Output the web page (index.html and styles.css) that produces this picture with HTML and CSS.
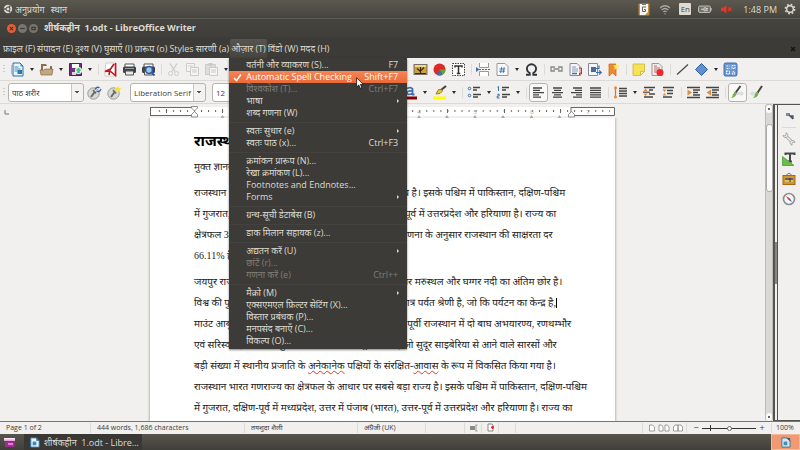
FILE: index.html
```html
<!DOCTYPE html>
<html lang="hi">
<head>
<meta charset="utf-8">
<title>शीर्षकहीन 1.odt - LibreOffice Writer</title>
<link rel="stylesheet" href="styles.css">
</head>
<body>
<header class="panel">
  <svg class="icon" viewBox="0 0 14 14"><circle cx="7" cy="7" r="4.200" fill="#dedbd2"/><circle cx="7" cy="7" r="2" fill="none" stroke="#4b4a43" stroke-width="1"/><g fill="#4b4a43"><circle cx="4" cy="7" r=".9"/><circle cx="8.500" cy="4.500" r=".9"/><circle cx="8.500" cy="9.500" r=".9"/></g></svg>
  <nav class="panel-menu"><a href="#apps">अनुप्रयोग</a><a href="#places">स्थान</a></nav>
  <div class="tray">
    <svg class="icon" viewBox="0 0 14 14"><rect x="1.500" y="1.500" width="11" height="12" rx="1" fill="#c48a3c"/><path d="M3 2h8v8l-3 3H3z" fill="#f5f4f0"/><rect x="5" y="1" width="4" height="2" fill="#777"/><path d="M9 5H5.500v4.500h3V7.500H7" stroke="#666" fill="none"/></svg>
    <svg class="icon" viewBox="0 0 14 14" fill="none" stroke="#aaa89f" stroke-width="1.200"><path d="M2 6q5-4.500 10 0M3.700 8q3.300-3 6.600 0M5.400 9.900q1.600-1.500 3.200 0"/><path d="M7 11.500v.8" stroke="#ddd"/></svg>
    <span class="lang">En</span>
    <svg class="icon" viewBox="0 0 14 14"><rect x=".5" y="4" width="12" height="6.500" rx="1.500" fill="#77756e" stroke="#bab7ae"/><path d="M13 6v2.500" stroke="#bab7ae" stroke-width="1.500"/><path d="M3 7.300h3M6 5.800h2v3H6zM8 6.500h2M8 8.200h2" stroke="#ddd" fill="none" stroke-width=".8"/></svg>
    <svg class="icon" viewBox="0 0 14 14"><path d="M2 5.500h2.500L7.500 3v8.500L4.500 9H2z" fill="#e0382b"/><path d="M9 5.500l3.500 3.500M12.500 5.500L9 9" stroke="#e0382b" stroke-width="1.100"/></svg>
    <time class="clock">1:48 PM</time>
    <svg class="icon" viewBox="0 0 14 14" fill="none" stroke="#dedbd2"><circle cx="7" cy="7" r="3.300" stroke-width="1.400"/><circle cx="7" cy="7" r="4.700" stroke-width="1.400" stroke-dasharray="1.800 1.890"/></svg>
  </div>
</header>

<div class="titlebar">
  <button class="win close" aria-label="Close"><svg viewBox="0 0 8 8"><path d="M2.500 2.500l3 3M5.500 2.500l-3 3"/></svg></button>
  <button class="win" aria-label="Minimize"><svg viewBox="0 0 8 8"><path d="M2 4h4"/></svg></button>
  <button class="win" aria-label="Maximize"><svg viewBox="0 0 8 8"><path d="M2.500 3h3v2h-3z"/></svg></button>
  <h1 class="title">शीर्षकहीन&nbsp; 1.odt - LibreOffice Writer</h1>
</div>

<nav class="menubar">
  <button>फ़ाइल (F)</button><button>संपादन (E)</button><button>दृश्य (V)</button><button>घुसाएँ (I)</button><button>प्रारूप (o)</button><button>Styles</button><button>सारणी (a)</button>
  <div class="menu-anchor">
    <button class="open">औज़ार (T)</button>
    <div class="menu">
      <button>वर्तनी और व्याकरण (S)...<kbd>F7</kbd></button>
      <button class="active"><svg class="check" viewBox="0 0 9 9"><path d="M1 5l2.500 2.500L8 1.500"/></svg>Automatic Spell Checking<kbd>Shift+F7</kbd></button>
      <button disabled>विश्वकोश (T)...<kbd>Ctrl+F7</kbd></button>
      <button class="sub">भाषा</button>
      <button>शब्द गणना (W)</button>
      <hr>
      <button class="sub">स्वतः सुधार (e)</button>
      <button>स्वतः पाठ (x)...<kbd>Ctrl+F3</kbd></button>
      <hr>
      <button>क्रमांकन प्रारूप (N)...</button>
      <button>रेखा क्रमांकण (L)...</button>
      <button>Footnotes and Endnotes...</button>
      <button class="sub">Forms</button>
      <hr>
      <button>ग्रन्थ-सूची डेटाबेस (B)</button>
      <hr>
      <button>डाक मिलान सहायक (z)...</button>
      <hr>
      <button class="sub">अद्यतन करें (U)</button>
      <button disabled>छांटें (r)...</button>
      <button disabled>गणना करें (e)<kbd>Ctrl++</kbd></button>
      <hr>
      <button class="sub">मैक्रो (M)</button>
      <button>एक्सएमएल फ़िल्टर सेटिंग (X)...</button>
      <button>विस्तार प्रबंधक (P)...</button>
      <button>मनपसंद बनाएँ (C)...</button>
      <button>विकल्प (O)...</button>
      <svg class="pointer" viewBox="0 0 8 12"><path d="M.6 .8v9.200l2.200-2 1.400 3.300 1.600-.7-1.400-3.200h3z" fill="#fff" stroke="#111" stroke-width=".8"/></svg>
    </div>
  </div>
  <button>विंडो (W)</button><button>मदद (H)</button>
  <button class="doc-close" aria-label="Close document"><svg viewBox="0 0 8 8"><path d="M2 2l4 4M6 2L2 6"/></svg></button>
</nav>

<div class="toolbar">
  <i class="grip"></i>
  <button class="tool" aria-label="New"><svg viewBox="0 0 15 15"><path d="M3 1h7l3 3v10H3z" fill="#e8f3fa" stroke="#2c6f9e"/><path d="M4.500 5h4M4.500 7h6M4.500 9h3" stroke="#4a90bd"/><rect x="7.500" y="8" width="4.500" height="4" fill="#2d7aae"/><path d="M10.500 1.500l2.500 3h-2.500z" fill="#3a91c8"/><path d="M1.500 3v9" stroke="#9cc4dc"/></svg></button><button class="drop" aria-label="New options"></button>
  <button class="tool" aria-label="Open"><svg viewBox="0 0 15 15"><path d="M2 2h5l1 2h5v8H2z" fill="#8d6d4b"/><path d="M4 4h7v6H4z" fill="#f0eeea"/><path d="M1 8h4l1-1h8l-1 6H2z" fill="#c4a680" stroke="#7a5c3c" stroke-width=".6"/></svg></button><button class="drop" aria-label="Open options"></button>
  <button class="tool" aria-label="Save"><svg viewBox="0 0 15 15"><path d="M1.500 1.500h12v12h-12z" fill="#73307e" stroke="#4c1d57"/><path d="M4 2h7v4H4z" fill="#fff"/><path d="M4 10h4v3H4z" fill="#ded2e2"/><circle cx="10.500" cy="8.500" r="3.600" fill="#d9f5e4"/><path d="M10.500 5.500l3 3h-1.700v2.500H9.200V8.500H7.500z" fill="#4cc27f"/></svg></button><button class="drop" aria-label="Save options"></button>
  <i class="sep"></i>
  <button class="tool" aria-label="Export PDF"><svg viewBox="0 0 15 15"><path d="M3 1h10v13H2V9z" fill="#fff" stroke="#bbb" stroke-width=".7"/><path d="M12.500 1v12.500L7 9l-5 .5L7.500 7 11 2M7 7l-1 6" fill="none" stroke="#c4161c" stroke-width="1.600"/></svg></button>
  <button class="tool" aria-label="Print"><svg viewBox="0 0 15 15"><path d="M3 2h9v4H3z" fill="#fff" stroke="#555"/><rect x="1" y="4.500" width="13" height="6.500" rx="1.500" fill="#3f4346"/><path d="M3 6.500h9" stroke="#9a9ea0"/><path d="M3.500 9h8v4h-8z" fill="#e8e8e6" stroke="#555"/></svg></button>
  <button class="tool" aria-label="Preview"><svg viewBox="0 0 15 15"><path d="M3 2h9v4H3z" fill="#fff" stroke="#555"/><rect x="1" y="4.500" width="13" height="6.500" rx="1.500" fill="#3f4346"/><path d="M3.500 9h8v4h-8z" fill="#e8e8e6" stroke="#555"/><circle cx="8" cy="8" r="3.400" fill="#9fc3ec" stroke="#2a5aa0" stroke-width="1.500"/><path d="M10.500 10.500l3 3" stroke="#2a5aa0" stroke-width="1.800"/></svg></button>
  <i class="sep"></i>
  <button class="tool faded" disabled aria-label="Cut"><svg viewBox="0 0 15 15" fill="none" stroke="#888"><path d="M4 1.500l5 8M11 1.500l-5 8" stroke-width="1.300"/><circle cx="4.500" cy="11.500" r="2"/><circle cx="10.500" cy="11.500" r="2"/></svg></button>
  <button class="tool faded" disabled aria-label="Copy"><svg viewBox="0 0 15 15" fill="#fff" stroke="#888"><path d="M1.500 1.500h8v8h-8z"/><path d="M5.500 5.500h8v8h-8z"/><path d="M7 8h5M7 10h5M3 4h5"/></svg></button>
  <button class="tool faded" disabled aria-label="Paste"><svg viewBox="0 0 15 15"><path d="M1.500 2.500h10v10h-10z" fill="#bbb" stroke="#888"/><path d="M4.500 1h4v3h-4z" fill="#888"/><path d="M5.500 5.500h8v8h-8z" fill="#fff" stroke="#888"/><path d="M7 8h5M7 10h5" stroke="#888"/></svg></button><button class="drop" aria-label="Paste options"></button>
  <i class="gap-standard"></i>
  <button class="tool" aria-label="Image"><svg viewBox="0 0 15 15"><rect x="1" y="2.500" width="13" height="10" fill="#d1a13c" stroke="#77736b"/><path d="M2 4h11" stroke="#f4d88a" stroke-width="2"/><path d="M7.500 5v7M4 6.500l3.500 3M11 5.500L7.500 9M2 11.500h11" stroke="#3b2a14" stroke-width="1.100"/></svg></button>
  <button class="tool" aria-label="Chart"><svg viewBox="0 0 15 15"><circle cx="7.500" cy="7.500" r="6" fill="#dc2a24"/><path d="M7.500 7.500h6a6 6 0 0 1-3 5.200z" fill="#5fa53a"/><path d="M7.500 7.500l3 5.200a6 6 0 0 1-5.500.3z" fill="#3d6fb4"/></svg></button>
  <button class="tool" aria-label="Text box"><svg viewBox="0 0 15 15"><path d="M1.500 1.500h12v12h-12z" fill="#fff" stroke="#444" stroke-dasharray="1.500 1"/><path d="M4 5.500V4h7v1.500M7.500 4v7.500M5.800 11.500h3.400" fill="none" stroke="#333" stroke-width="1.500"/></svg></button>
  <i class="sep"></i>
  <button class="tool" aria-label="Page break"><svg viewBox="0 0 15 15"><path d="M3.500 1v4.500h9V1M3.500 14V9.500h9V14" fill="#fff" stroke="#999"/><path d="M3 7.500h11" stroke="#3d6fb4" stroke-dasharray="2 1"/><path d="M0 5l3.500 2.500L0 10z" fill="#3d6fb4"/></svg></button>
  <button class="tool" aria-label="Field"><svg viewBox="0 0 15 15"><path d="M2 1.500h8l3 3v9H2z" fill="#fafafa" stroke="#999"/><path d="M6.700 5l-1 6M9.200 5l-1 6M4.500 7h5.800M4.200 9.200h5.800" stroke="#3d6fb4" stroke-width=".9"/></svg></button><button class="drop" aria-label="Field options"></button>
  <button class="tool" aria-label="Special character"><svg viewBox="0 0 15 15"><path d="M2 12.700h3.700V11A5 5 0 0 1 2.900 6.800a4.600 4.600 0 0 1 9.200 0A5 5 0 0 1 9.300 11v1.700H13" fill="none" stroke="#2f3436" stroke-width="1.900"/></svg></button>
  <i class="sep"></i>
  <button class="tool" aria-label="Hyperlink"><svg viewBox="0 0 15 15" fill="none" stroke="#888" stroke-width="1.300"><path d="M6 5H2v4h4M9 5h4v4H9M4.500 7h6"/></svg></button>
  <button class="tool" aria-label="Footnote"><svg viewBox="0 0 15 15"><path d="M2 1.500h7l3 3v9H2z" fill="#f3f5f8" stroke="#889"/><path d="M4 5h4M4 7h6M4 9h6" stroke="#8d9bb0"/><path d="M4 11.500h5" stroke="#3d6fb4" stroke-width="1.500"/><path d="M11 6h2.500v6H11l1.500-1.500M11 12l1.500 1.200" fill="none" stroke="#dc2a24"/></svg></button>
  <button class="tool" aria-label="Cross-reference"><svg viewBox="0 0 15 15"><path d="M1.500 1.500h9v12h-9z" fill="#f3f5f8" stroke="#889"/><path d="M4 5h5v5H4z" fill="#52698a"/><path d="M9 6.500h3v-3M9 10.500h5M12 8.500l2.500 2-2.500 2" fill="none" stroke="#3d6fb4" stroke-width="1.200"/></svg></button>
  <button class="tool" aria-label="Bookmark"><svg viewBox="0 0 15 15"><path d="M3 2h7v12l-3.500-3L3 14z" fill="#ee8a2c" stroke="#c2661a" stroke-width=".7"/><path d="M10.500 1l1 2.200 2.500.4-1.800 1.700.5 2.500-2.200-1.200-2.200 1.200.5-2.500L7 3.600l2.500-.4z" fill="#ffe96b"/></svg></button>
  <i class="sep"></i>
  <button class="tool" aria-label="Comment"><svg viewBox="0 0 15 15"><path d="M2 2h11.500v7.500l-4 4H2z" fill="#f6e255" stroke="#cdb53a" stroke-width=".8"/><path d="M9.500 13.500v-4h4z" fill="#fff6b0" stroke="#cdb53a" stroke-width=".8"/></svg></button>
  <button class="tool" aria-label="Track changes"><svg viewBox="0 0 15 15"><path d="M2 1.500h7l3 3v9H2z" fill="#eee" stroke="#999"/><path d="M4 4h3M4 6h6M4 8h5M4 10h3" stroke="#c66"/><circle cx="10" cy="10.500" r="3.500" fill="#ea2b2f"/></svg></button>
  <i class="sep"></i>
  <button class="tool" aria-label="Line"><svg viewBox="0 0 15 15"><path d="M2 12.500L13 2.500" stroke="#444" stroke-width="1.200"/></svg></button>
  <button class="tool" aria-label="Shapes"><svg viewBox="0 0 15 15"><path d="M7.500 1.500l6 6-6 6-6-6z" fill="#6090d0" stroke="#315f9d"/></svg></button><button class="drop" aria-label="Shape options"></button>
  <button class="tool" aria-label="Draw functions"><svg viewBox="0 0 15 15"><rect x="1" y="1" width="13" height="13" rx="1.500" fill="#6d97cf" stroke="#3d6fb4"/><path d="M3.500 4h3M3.500 6.500h3M9 3.500h3v3H9zM3.500 9h3v3h-3zM9 12l1.500-3 1.500 3z" fill="none" stroke="#fff" stroke-dasharray="1.500 .7"/></svg></button>
</div>

<div class="toolbar">
  <i class="grip"></i>
  <select class="combo wide" aria-label="Paragraph style"><option>पाठ शरीर</option></select>
  <button class="tool style" aria-label="Update style"><svg viewBox="0 0 15 15"><circle cx="6.500" cy="8.500" r="5.700" fill="#d8dad7" stroke="#9a9c99"/><path d="M4 12l4-5.500" stroke="#666a6b" stroke-width="2"/><path d="M6 5l3 3.500" stroke="#666a6b" stroke-width="1.600"/><path d="M8 4.500q2-3.500 4.500-1.500M14 4q-1.500 4-4.500 2" fill="none" stroke="#2f65b0" stroke-width="1.400"/></svg></button>
  <button class="tool style" aria-label="New style"><svg viewBox="0 0 15 15"><circle cx="6.500" cy="8.500" r="5.700" fill="#d8dad7" stroke="#9a9c99"/><path d="M4 12l4-5.500" stroke="#666a6b" stroke-width="2"/><path d="M6 5l3 3.500" stroke="#666a6b" stroke-width="1.600"/><path d="M11 .8l1 2.200 2.500.3-1.800 1.800.5 2.500-2.200-1.200-2.200 1.200.5-2.500L7.500 3.300l2.500-.3z" fill="#f5e13a"/></svg></button>
  <select class="combo wide font" aria-label="Font name"><option>Liberation Serif</option></select>
  <select class="combo size" aria-label="Font size"><option>12</option></select>
  <i class="gap-format"></i>
  <button class="tool" aria-label="Font colour"><svg viewBox="0 0 15 15"><path d="M4 3.500q4-2 5.500.5V9M9.500 6Q4 5.500 4 8t5.500.500M9 9.500h2.500" fill="none" stroke="#3d6fb4" stroke-width="1.800"/><path d="M1 11.500h13v3H1z" fill="#8b0000"/></svg></button><button class="drop" aria-label="Colour options"></button>
  <button class="tool" aria-label="Highlight"><svg viewBox="0 0 15 15"><path d="M14 1L9 5" stroke="#444" stroke-width="2.200"/><path d="M9.500 4.500l-3 0L4 9l4-.5 2.500-2.500z" fill="#e9c52c" stroke="#7d6a1f" stroke-width=".8"/><path d="M1 11.500h13v3H1z" fill="#ff0"/></svg></button><button class="drop" aria-label="Highlight options"></button>
  <i class="sep"></i>
  <button class="tool" aria-label="Bullets"><svg viewBox="0 0 15 15"><path d="M6 2.500h7M6 5h4M6 9.500h8M6 12h5" stroke="#444" stroke-width="1.400"/><g fill="none" stroke="#3d6fb4"><circle cx="2.500" cy="3.500" r="1.300"/><circle cx="2.500" cy="10.500" r="1.300"/></g></svg></button><button class="drop" aria-label="Bullet options"></button>
  <button class="tool" aria-label="Numbering"><svg viewBox="0 0 15 15"><path d="M6 2.500h7M6 5h4M6 9.500h8M6 12h5" stroke="#444" stroke-width="1.400"/><path d="M1.500 2L2.500 1.500V6M1.200 9.300h2v1.700h-2v2h2.300" fill="none" stroke="#3d6fb4"/></svg></button><button class="drop" aria-label="Numbering options"></button>
  <i class="sep"></i>
  <button class="tool pressed" aria-label="Align left"><svg viewBox="0 0 15 15"><path d="M2 3h9M2 5.300h7M2 7.600h11M2 9.900h6M2 12.200h8"/></svg></button>
  <button class="tool lines" aria-label="Align centre"><svg viewBox="0 0 15 15"><path d="M3 3h9M4 5.300h7M2 7.600h11M4 9.900h7M3 12.200h9"/></svg></button>
  <button class="tool lines" aria-label="Align right"><svg viewBox="0 0 15 15"><path d="M4 3h9M6 5.300h7M2 7.600h11M7 9.900h6M4 12.200h9"/></svg></button>
  <button class="tool lines" aria-label="Justify"><svg viewBox="0 0 15 15"><path d="M2 3h11M2 5.300h11M2 7.600h11M2 9.900h11M2 12.200h11"/></svg></button>
  <i class="sep"></i>
  <button class="tool lines" aria-label="Line spacing"><svg viewBox="0 0 15 15"><path d="M6 3.500h8M6 6h8M6 8.500h8M6 11h8"/><path d="M2.500 3v9" style="stroke:#d9762b"/><circle cx="2.500" cy="2.800" r="1.500" fill="#e98a3a"/><circle cx="2.500" cy="12" r="1.500" fill="#e98a3a"/></svg></button><button class="drop" aria-label="Spacing options"></button>
  <button class="tool lines" aria-label="Increase spacing"><svg viewBox="0 0 15 15"><path d="M2 2.500h11M7 5h4M7 9h6M2 12h9"/><path d="M1 7.200h7" style="stroke:#555"/><path d="M3.500 3.500l2 2.500h-4zM3.500 11l2-2.500h-4z" fill="#e98a3a"/></svg></button>
  <button class="tool lines" aria-label="Decrease spacing"><svg viewBox="0 0 15 15"><path d="M2 2.500h11M6 5.500h6M6 8.500h6M2 12h9"/><path d="M3.500 7l2-2.500h-4zM3.500 8l2 2.500h-4z" fill="#e98a3a"/></svg></button>
  <i class="sep"></i>
  <button class="tool lines" aria-label="Increase indent"><svg viewBox="0 0 15 15"><path d="M1 2.500h13M7 5h7M7 7.500h5M7 10h7M1 12.500h13"/><path d="M1.500 4.500L6 7.500l-4.500 3z" fill="#e98a3a"/></svg></button>
  <button class="tool lines" aria-label="Decrease indent"><svg viewBox="0 0 15 15"><path d="M1 2.500h13M7 5h7M7 7.500h5M7 10h7M1 12.500h13"/><path d="M6 4.500L1.500 7.500l4.500 3z" fill="#e98a3a"/></svg></button>
  <i class="sep"></i>
  <button class="tool pressed" aria-label="Left to right"><svg viewBox="0 0 15 15"><path d="M7 7h4V5.500l3 3-3 3V10H6z" fill="#ddd"/><path d="M10.500 1L5 8.500" style="stroke:#444;stroke-width:2"/><path d="M6 6.500L3 9q-.5 3-2 4 4 0 5.500-4z" fill="#6fb544"/></svg></button>
  <button class="tool lines" aria-label="Right to left"><svg viewBox="0 0 15 15"><path d="M8 7H4V5.500l-3 3 3 3V10h4z" fill="#ddd"/><path d="M13 1L8 8.500" style="stroke:#444;stroke-width:2"/><path d="M8.500 6.500L6 9q-.5 3-2 4 4 0 5.500-4z" fill="#6fb544"/></svg></button>
</div>

<main class="workspace">
  <section class="editor">
    <div class="ruler-row">
      <svg class="tab-mark" viewBox="0 0 6 6"><path d="M1 1v4h4" fill="none" stroke="#777"/></svg>
      <svg class="ruler" viewBox="0 0 465 14">
        <defs><pattern id="tick" width="7.040" height="14" patternUnits="userSpaceOnUse" x="44"><rect x="0" y="6" width="1" height="2" fill="#666"/></pattern></defs>
        <rect width="465" height="9" y="3" fill="#fff"/>
        <rect width="456" height="14" x="4" fill="url(#tick)"/>
        <g stroke="#666" fill="none"><path d="M16.500 5v4M72.500 5v4M128.500 5v4M185.500 5v4M241.500 5v4M297.500 5v4M354.500 5v4M410.500 5v4" stroke-width="1"/><path d="M.5 3.500h44M.5 11.500h44M.5 3v9M421 3.500h43.500v8H421V3" /></g>
        <g fill="#aaa"><path d="M70.500 14l2-3 2 3zM98.500 14l2-3 2 3zM126.500 14l2-3 2 3zM154.500 14l2-3 2 3zM182.500 14l2-3 2 3zM210.500 14l2-3 2 3zM238.500 14l2-3 2 3zM267 14l2-3 2 3zM295 14l2-3 2 3zM323 14l2-3 2 3zM351 14l2-3 2 3zM379.500 14l2-3 2 3zM407.500 14l2-3 2 3z"/></g>
        <g class="ruler-num"><text x="269" y="10">4</text><text x="325" y="10">5</text><text x="382" y="10">6</text><text x="438" y="10">7</text></g>
        <g fill="#f7f7f6" stroke="#777" stroke-width=".8"><path d="M41.500 2.500h6v1.500l-3 3-3-3zM41.500 13v-2.500l3-3 3 3V13z"/><path d="M418.500 13v-2.500l3-3 3 3V13z"/></g>
      </svg>
    </div>
    <div class="canvas">
      <article class="page">
        <h2>राजस्थान</h2>
        <p class="lead">मुक्त ज्ञानकोश से</p>
        <p>राजस्थान भारत गणराज्य का क्षेत्रफल के आधार पर बड़ा राज्य है। इसके पश्चिम में पाकिस्तान, दक्षिण-पश्चिम<br>में गुजरात, दक्षिण-पूर्व में मध्यप्रदेश, उत्तर में पंजाब भी, उत्तर-पूर्व में उत्तरप्रदेश और हरियाणा है। राज्य का<br>क्षेत्रफल 3,42,239 वर्ग कि.मी. (132,139 वर्ग मील) है। जन गणना के अनुसार राजस्थान की साक्षरता दर<br>66.11% हैं।</p>
        <p>जयपुर राज्य की राजधानी है। भौगोलिक विशेषता में पश्चिम थार मरुस्थल और घग्गर नदी का अंतिम छोर है।<br>विश्व की पुरातन श्रेणियों में अरावली श्रेणी राजस्थान की एक मात्र पर्वत श्रेणी है, जो कि पर्यटन का केन्द्र है,<span class="caret"></span><br>माउंट आबू और विश्वविख्यात दिलवाड़ा मंदिर शामिल किए है। पूर्वी राजस्थान में दो बाघ अभयारण्य, रणथम्भौर<br>एवं सरिस्का हैं और भरतपुर के पास केवलादेव राष्ट्रीय उद्यान, जो सुदूर साइबेरिया से आने वाले सारसों और<br>बड़ी संख्या में स्थानीय प्रजाति के <u>अनेकानेक</u> पक्षियों के संरक्षित-<u>आवास</u> के रूप में विकसित किया गया है।<br>राजस्थान भारत गणराज्य का क्षेत्रफल के आधार पर सबसे बड़ा राज्य है। इसके पश्चिम में पाकिस्तान, दक्षिण-पश्चिम<br>में गुजरात, दक्षिण-पूर्व में मध्यप्रदेश, उत्तर में पंजाब (भारत), उत्तर-पूर्व में उत्तरप्रदेश और हरियाणा है। राज्य का</p>
      </article>
    </div>
  </section>
  <div class="scrollbar"><i class="up"></i><i class="thumb"></i><i class="down"></i></div>
  <div class="splitter"><i></i></div>
  <aside class="sidebar">
    <button aria-label="Sidebar settings"><svg viewBox="0 0 14 14"><path d="M4 4h4v3H4z" fill="#7d8ba0"/><path d="M8 7h3v3M11 10L7 6" stroke="#445066" fill="none" stroke-width="1.300"/></svg></button>
    <hr>
    <button aria-label="Properties"><svg viewBox="0 0 14 14"><path d="M3.500 3.500l7 7" stroke="#999" stroke-width="3"/><path d="M3.500 3.500l7 7" stroke="#f2f2f0" stroke-width="1.500"/><path d="M1 3.500a2.500 2.500 0 0 0 4.500 1A2.500 2.500 0 0 0 4 .8V3L3 4zM13 10.500a2.500 2.500 0 0 0-4.500-1A2.500 2.500 0 0 0 10 13.200V11l1-1z" fill="#eee" stroke="#999" stroke-width=".8"/></svg></button>
    <button aria-label="Styles"><svg viewBox="0 0 14 14"><path d="M3.500 3V1.500h9V3M8 1.500v8M6 9.500h4" stroke="#44484a" stroke-width="2" fill="none"/><path d="M.5 4.500L12 13.500H.5z" fill="#6cc04a" stroke="#3f8f25" stroke-width=".7"/></svg></button>
    <button aria-label="Gallery"><svg viewBox="0 0 14 14"><path d="M4 3.500L7 1l3 2.500" fill="none" stroke="#777"/><rect x="1" y="3.500" width="12" height="9" fill="#d6942c" stroke="#a86a16"/><path d="M3 6h8v4.500H3z" fill="#5b6470"/><path d="M3 8h8v2.500H3z" fill="#e5bd5b"/><path d="M8 6v4" stroke="#333"/></svg></button>
    <button aria-label="Navigator"><svg viewBox="0 0 14 14"><circle cx="7" cy="7" r="5.500" fill="#f6f8fb" stroke="#8d8f8e" stroke-width="1.700"/><path d="M4 4l3.800 2.200L6.200 7.800z" fill="#d83a32"/><path d="M10 10L6.200 7.800l1.600-1.600z" fill="#3a62b0"/></svg></button>
  </aside>
</main>

<footer class="status">
  <span>Page 1 of 2</span>
  <span>444 words, 1,686 characters</span>
  <span>तयशुदा शैली</span>
  <span>अंग्रेजी (UK)</span>
  <span></span>
  <span class="mark"><svg viewBox="0 0 9 9"><path d="M1 3h5v4H1z" fill="#8a8a88"/><path d="M7 2v6M6.500 2h2M6.500 8h2" stroke="#999"/></svg></span>
  <span class="mark"><svg viewBox="0 0 9 9"><path d="M2 1h4l1 1v6H2z" fill="#fff" stroke="#888"/><circle cx="6.500" cy="4.500" r="1.400" fill="#d22"/></svg></span>
  <span></span>
  <span></span>
  <span class="views">
    <button aria-label="Single page"><svg viewBox="0 0 8 8"><path d="M1.500 1h3l2 2v4h-5z"/></svg></button>
    <button aria-label="Multiple pages"><svg viewBox="0 0 12 8"><path d="M1 1h2.500l1.500 2v4H1zM7 1h2.500l1.500 2v4H7z"/></svg></button>
    <button aria-label="Book view"><svg viewBox="0 0 12 8"><path d="M1.500 7V3l1.500-2h3v6zM6 7V1h3l1.500 2v4z"/></svg></button>
  </span>
  <span class="zoom"><button aria-label="Zoom out">−</button><input type="range" min="0" max="100" value="50" aria-label="Zoom"><button aria-label="Zoom in">+</button></span>
  <span class="percent">100%</span>
</footer>

<footer class="taskbar">
  <button class="desk" aria-label="Show desktop"><svg viewBox="0 0 14 14"><path d="M2 3h11v3H2z" fill="#e6a6d8"/><path d="M2 3h11v1.500H2z" fill="#fbe9f7"/><path d="M3 6.500h9.500V12H3z" fill="#a02c92"/><path d="M6 8h5v2H6z" fill="#dd7fd0"/></svg></button>
  <button class="task"><svg viewBox="0 0 12 12"><path d="M2 1h6l3 3v7H2z" fill="#e8f3fa" stroke="#3b86b5"/><path d="M4 5h4v4H4z" fill="#3b86b5"/><path d="M8 1l3 3H8z" fill="#195d8a"/></svg>शीर्षकहीन&nbsp; 1.odt - Libre…</button>
  <button class="workspace-switch" aria-label="Workspace"><svg viewBox="0 0 12 12"><path d="M2 1h6l3 3v7H2z" fill="#d5e6ee" stroke="#3b7390"/><path d="M4 5h4v4H4z" fill="#4b8cab"/><path d="M7 1h4v4z" fill="#2b5d78"/></svg></button>
</footer>
</body>
</html>
```
FILE: styles.css
```css
* { box-sizing: border-box; }

body {
  margin: 0;
  height: 100vh;
  display: flex;
  flex-direction: column;
  overflow: hidden;
  background: #f1f0ee;
  color: #3c3c3c;
  font-family: "Open Sans", "Noto Sans", sans-serif;
  font-size: 9px;
}

button {
  margin: 0;
  padding: 0;
  border: 0;
  background: none;
  color: inherit;
  font: inherit;
  white-space: nowrap;
}

button svg { display: block; }

/* Desktop panel */
.panel {
  flex: none;
  display: flex;
  align-items: center;
  height: 18px;
  padding: 0 3px 0 1px;
  background: linear-gradient(#5b594f, #45443e);
  color: #dedbd2;
}

.icon { width: 14px; height: 14px; }
.panel-menu { display: flex; gap: 6px; }
.panel-menu a { color: inherit; text-decoration: none; }
.tray { display: flex; align-items: center; gap: 7px; margin-left: auto; }

.lang {
  width: 12px;
  height: 12px;
  border-radius: 1px;
  background: #dedbd2;
  color: #4b4a43;
  font-size: 8px;
  line-height: 12px;
  text-align: center;
}

.clock { margin: 0 -1px 0 3px; }

/* Window frame */
.titlebar {
  flex: none;
  display: flex;
  align-items: center;
  gap: 2px;
  height: 20px;
  padding-left: 7px;
  border-top: 1px solid #5c5b54;
  background: linear-gradient(#45443f, #3e3d39);
}

.win {
  width: 9px;
  height: 9px;
  border-radius: 50%;
  background: #77756d;
}

.win.close { background: #ee5a30; }
.win svg { width: 9px; height: 9px; fill: none; stroke: #3a3935; }

.title {
  margin: 0 0 2px 4px;
  color: #dedbd2;
  font-size: 9px;
  line-height: 14px;
}

/* Menu bar */
.menubar {
  flex: none;
  display: flex;
  align-items: stretch;
  height: 20px;
  padding: 1px 3px 0 2px;
  background: #3c3b37;
  color: #dedbd2;
}

.menubar > button,
.open { padding: 0 1px; }
.menu-anchor { position: relative; display: flex; }

.open {
  border-radius: 2px 2px 0 0;
  background: linear-gradient(#56554e, #45443f);
}

.menubar > .doc-close { margin-left: auto; padding: 0; }
.doc-close svg { width: 8px; height: 8px; fill: none; stroke: #161614; stroke-width: 1.5; }

.menu {
  position: absolute;
  top: 100%;
  left: -1px;
  z-index: 5;
  width: 178px;
  padding: 1px 0 2px;
  background: #3c3b37;
  box-shadow: 0 1px 2px rgba(0, 0, 0, .5);
}

.menu button {
  position: relative;
  display: flex;
  align-items: center;
  width: 100%;
  height: 12px;
  padding: 0 9px 0 17px;
  line-height: 12px;
}

.menu button:disabled { color: #807e78; }
.menu .active { background: linear-gradient(#f58558, #ea6a36); color: #fff; }
.menu kbd { margin-left: auto; font: inherit; }
.menu hr { height: 1px; margin: 3px 0 2px; border: 0; background: #43423e; }

.sub::after {
  content: "";
  margin-left: auto;
  margin-right: -1px;
  border: 2px solid transparent;
  border-left-color: #dedbd2;
  border-right: 0;
}

.check {
  position: absolute;
  left: 4px;
  width: 9px;
  height: 9px;
  fill: none;
  stroke: #fff;
  stroke-width: 1.5;
}

.pointer { position: absolute; top: 19px; left: 127px; width: 8px; height: 12px; }

/* Toolbars */
.toolbar {
  flex: none;
  display: flex;
  align-items: center;
  height: 23px;
  overflow: hidden;
  border-bottom: 1px solid #dcdad7;
}

.grip {
  flex: none;
  width: 2px;
  height: 9px;
  margin: 0 3px;
  background: repeating-linear-gradient(#ccc 0 1px, transparent 1px 3px);
}

.tool {
  flex: none;
  display: flex;
  align-items: center;
  justify-content: center;
  width: 19px;
  height: 19px;
}

.tool svg { width: 15px; height: 15px; }
.faded { opacity: .35; }

.pressed {
  border: 1px solid #b5b3ae;
  border-radius: 3px;
  background: #f8f8f7;
}

.pressed path,
.lines path { stroke: #444; stroke-width: 1.3; }
.pressed path[fill],
.lines path[fill] { stroke: none; }

.drop { flex: none; display: flex; justify-content: center; width: 10px; }

.drop::after {
  content: "";
  border: 2px solid transparent;
  border-top: 3px solid #2b2b2b;
  border-bottom: 0;
}

.sep { flex: none; width: 1px; height: 11px; margin: 0 2px 0 3px; background: #dddbd8; }
.gap-standard { flex: none; width: 180px; }
.gap-format { flex: none; width: 151px; }

.combo {
  flex: none;
  appearance: none;
  height: 19px;
  padding: 0 3px;
  border: 1px solid #b5b3ae;
  border-radius: 3px;
  background:
    linear-gradient(to top left, transparent 50%, #555 52%) right 3px center / 3px 3px no-repeat,
    linear-gradient(to top right, transparent 50%, #555 52%) right 6px center / 3px 3px no-repeat,
    linear-gradient(#c9c7c3, #c9c7c3) right 11px center / 1px 100% no-repeat,
    linear-gradient(#f3f2f0, #f3f2f0) right / 11px 100% no-repeat,
    #fff;
  color: #3c3c3c;
  font-family: inherit;
  font-size: 8px;
}

.wide { width: 76px; }
.font { margin: 0 6px; }
.size { width: 38px; }
.style { margin-left: 1px; }

/* Document area */
.workspace { flex: 1; display: flex; min-height: 0; }
.editor { flex: 1; display: flex; flex-direction: column; min-width: 0; }

.ruler-row {
  position: relative;
  flex: none;
  display: flex;
  justify-content: center;
  height: 14px;
}

.tab-mark { position: absolute; top: 5px; left: 4px; width: 6px; height: 6px; }
.ruler { width: 465px; height: 14px; }
.ruler-num { fill: #999; font-size: 6px; text-anchor: middle; }

.canvas { flex: 1; display: flex; justify-content: center; min-height: 0; overflow: hidden; }

.page {
  width: 465px;
  padding: 12px 0 0 44px;
  background: #fff;
  box-shadow: 0 0 2px 1px #bbb;
  color: #1c1c1c;
  font-family: "Liberation Serif", "Noto Sans Devanagari", serif;
  font-size: 10px;
  line-height: 21px;
  white-space: nowrap;
}

.page h2 { margin: 0; color: #000; font-size: 15px; line-height: 22px; }
.page p { margin: 0 0 5px; }
.page .lead { margin-top: 4px; }
.page u { text-decoration: underline wavy #e33 1px; }

.caret {
  display: inline-block;
  width: 1px;
  height: 10px;
  background: #000;
  vertical-align: -2px;
}

.scrollbar {
  flex: none;
  display: flex;
  flex-direction: column;
  align-items: center;
  width: 8px;
  border: 1px solid #bdbbb7;
  border-bottom: 0;
  border-radius: 3px;
  background: #d9d8d5;
}

.up,
.down { width: 6px; height: 8px; border-radius: 3px; background: #fafafa; }
.up::after,
.down::after { content: ""; display: block; margin: 3px auto 0; width: 2px; height: 2px; background: #666; }
.thumb { width: 7px; height: 68px; margin-top: 11px; border: 1px solid #aaa; border-radius: 3px; background: #fafafa; }
.down { margin-top: auto; }

.splitter {
  flex: none;
  display: flex;
  align-items: center;
  width: 5px;
  border: solid #55534f;
  border-width: 1px 1px 1px 2px;
  background: #f1f0ee;
}

.splitter i { flex: 1; height: 42px; background: #8a8885; }

.sidebar {
  flex: none;
  display: flex;
  flex-direction: column;
  align-items: center;
  gap: 6px;
  width: 22px;
  padding-top: 4px;
  border-top: 1px solid #55534f;
  border-bottom: 1px solid #55534f;
}

.sidebar svg { width: 14px; height: 14px; }
.sidebar hr { width: 14px; height: 1px; margin: -2px 0; border: 0; background: #dcdad7; }

/* Status bar */
.status {
  flex: none;
  display: grid;
  grid-template-columns: 91px 154px 113px 68px 39px 17px 17px 17px 1fr 44px 85px 28px;
  align-items: center;
  height: 13px;
  border-top: 1px solid #77756f;
  font-size: 7px;
  line-height: 11px;
  white-space: nowrap;
}

.status > span { height: 10px; padding-left: 6px; border-right: 1px solid #dcdad7; line-height: 10px; }
.status > .mark { padding-left: 4px; }
.mark svg { display: block; width: 9px; height: 9px; }
.status > .views { display: flex; gap: 2px; padding-left: 5px; }
.views svg { height: 8px; fill: #fff; stroke: #888; stroke-width: .8; }
.status > .zoom { display: flex; align-items: center; gap: 2px; padding: 0 5px; }
.status > .percent { padding-left: 4px; border: 0; }

.zoom button { flex: none; width: 8px; font-size: 9px; line-height: 10px; }

.zoom input {
  appearance: none;
  flex: 1;
  min-width: 0;
  height: 8px;
  margin: 0;
  background:
    linear-gradient(#333, #333) 8px center / 1px 6px no-repeat,
    linear-gradient(#333, #333) center / 100% 1px no-repeat;
}

.zoom input::-webkit-slider-thumb {
  appearance: none;
  width: 5px;
  height: 5px;
  border: 1px solid #666;
  border-radius: 50%;
  background: #fff;
}

/* Task list */
.taskbar {
  flex: none;
  display: flex;
  height: 16px;
  background: linear-gradient(#57554c, #403f3a);
  color: #dedbd2;
}

.desk { width: 24px; padding-left: 2px; }
.desk svg { width: 14px; height: 14px; }

.task {
  display: flex;
  align-items: center;
  gap: 4px;
  width: 118px;
  padding-left: 5px;
  background: #393834;
}

.task svg { flex: none; width: 11px; height: 11px; }

.workspace-switch {
  display: flex;
  align-items: center;
  justify-content: center;
  width: 29px;
  margin-left: auto;
  border: 1px solid #f5b79c;
  background: #f09a74;
}

.workspace-switch svg { width: 11px; height: 11px; }
```
